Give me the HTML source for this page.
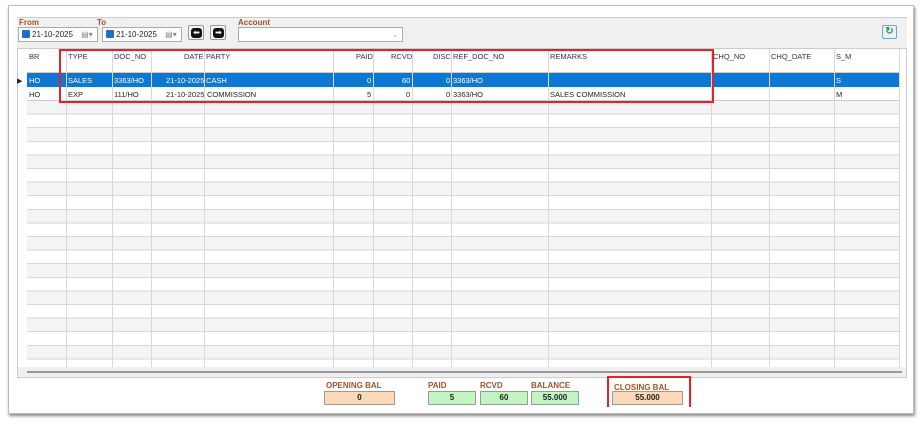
<!DOCTYPE html>
<html><head><style>
*{margin:0;padding:0;box-sizing:border-box}
body{width:924px;height:424px;background:#fff;font-family:"Liberation Sans",Arial,sans-serif;font-size:8px;color:#222;position:relative;overflow:hidden}
.a{position:absolute}
.win{left:8px;top:5px;width:906px;height:409px;border:1px solid #bbb;box-shadow:1px 2px 3px #888;background:#fff}
.lbl{color:#a0522d;font-weight:bold;font-size:8px}
.dt{height:15px;border:1px solid #aaa;background:#fff;font-size:8px;padding:2px 0 0 3px}
.cb{display:inline-block;width:8px;height:8px;background:#1e6fc8;border-radius:1px;vertical-align:-1px;margin-right:2px}
.nb{width:16px;height:15px;border:1px solid #999;border-radius:2px;background:#f4f4f4}
.nb div{position:absolute;left:2px;top:2px;width:11px;height:10px;background:#111;border-radius:3px;color:#fff;font-size:8px;line-height:10px;text-align:center}
.h{position:absolute;top:52px;font-size:7.5px;color:#333}
.c{position:absolute;font-size:7.5px}
.vl{position:absolute;top:49px;width:1px;height:318px;background:#d8d8d8}
.box{font-size:8px;font-weight:bold;text-align:center;line-height:12px;height:14px;border:1px solid #999}
</style></head><body>
<div class="a win"></div>
<div class="a" style="left:17px;top:17px;width:890px;height:31px;background:#f0f0f0;border-top:1px solid #ccc"></div>
<div class="a lbl" style="left:19px;top:18px">From</div>
<div class="a lbl" style="left:97px;top:18px">To</div>
<div class="a lbl" style="left:238px;top:18px">Account</div>
<div class="a dt" style="left:18px;top:27px;width:80px"><span class="cb"></span>21-10-2025 <span style="color:#888;margin-left:6px">▤▾</span></div>
<div class="a dt" style="left:102px;top:27px;width:80px"><span class="cb"></span>21-10-2025 <span style="color:#888;margin-left:6px">▤▾</span></div>
<div class="a nb" style="left:188px;top:25px"><div>⬅</div></div>
<div class="a nb" style="left:210px;top:25px"><div>➡</div></div>
<div class="a" style="left:238px;top:27px;width:165px;height:15px;border:1px solid #aaa;background:#fff;color:#999;font-size:7px;text-align:right;padding:3px 4px 0 0">⌄</div>
<div class="a" style="left:882px;top:25px;width:15px;height:14px;border:1px solid #6aa6d8;border-radius:2px;background:#e8f3fb;color:#2a9a3a;font-size:10px;line-height:12px;text-align:center;font-weight:bold">↻</div>
<!-- grid -->
<div class="a" style="left:17px;top:48px;width:890px;height:330px;background:#fff;border:1px solid #ccc"></div>
<div class="a" style="left:18px;top:367px;width:888px;height:10px;background:#f0f0f0"></div>
<div class="a" style="left:27px;top:49px;width:872px;height:24px;background:#fff;border-bottom:1px solid #ccc"></div>
<div class="a" style="left:27px;top:101px;width:872px;height:266px;background:repeating-linear-gradient(#f4f4f4 0,#f4f4f4 12.6px,#d6d6d6 12.6px,#d6d6d6 13.6px,#fff 13.6px,#fff 26.2px,#d6d6d6 26.2px,#d6d6d6 27.2px)"></div>
<div class="a" style="left:27px;top:73px;width:872px;height:14px;background:#0a78d4"></div>
<div class="a" style="left:27px;top:87px;width:872px;height:14px;background:#fff;border-bottom:1px solid #ccc"></div>
<div class="a" style="left:17px;top:77px;font-size:7px">▶</div>
<div class="vl" style="left:66px"></div><div class="vl" style="left:112px"></div><div class="vl" style="left:151px"></div><div class="vl" style="left:204px"></div><div class="vl" style="left:333px"></div><div class="vl" style="left:373px"></div><div class="vl" style="left:412px"></div><div class="vl" style="left:451px"></div><div class="vl" style="left:548px"></div><div class="vl" style="left:711px"></div><div class="vl" style="left:769px"></div><div class="vl" style="left:834px"></div><div class="vl" style="left:899px"></div>
<div class="h" style="left:29px">BR</div><div class="h" style="left:68px">TYPE</div><div class="h" style="left:114px">DOC_NO</div><div class="h" style="left:184px">DATE</div><div class="h" style="left:206px">PARTY</div><div class="h" style="left:356px">PAID</div><div class="h" style="left:391px">RCVD</div><div class="h" style="left:433px">DISC</div><div class="h" style="left:453px">REF_DOC_NO</div><div class="h" style="left:550px">REMARKS</div><div class="h" style="left:713px">CHQ_NO</div><div class="h" style="left:771px">CHQ_DATE</div><div class="h" style="left:836px">S_M</div>
<div style="color:#fff">
<div class="c" style="left:29px;top:76px">HO</div><div class="c" style="left:68px;top:76px">SALES</div><div class="c" style="left:114px;top:76px">3363/HO</div><div class="c" style="left:166px;top:76px">21-10-2025</div><div class="c" style="left:206px;top:76px">CASH</div><div class="c" style="left:367px;top:76px">0</div><div class="c" style="left:402px;top:76px">60</div><div class="c" style="left:446px;top:76px">0</div><div class="c" style="left:453px;top:76px">3363/HO</div><div class="c" style="left:836px;top:76px">S</div>
</div>
<div class="c" style="left:29px;top:90px">HO</div><div class="c" style="left:68px;top:90px">EXP</div><div class="c" style="left:114px;top:90px">111/HO</div><div class="c" style="left:166px;top:90px">21-10-2025</div><div class="c" style="left:207px;top:90px">COMMISSION</div><div class="c" style="left:367px;top:90px">5</div><div class="c" style="left:406px;top:90px">0</div><div class="c" style="left:446px;top:90px">0</div><div class="c" style="left:453px;top:90px">3363/HO</div><div class="c" style="left:550px;top:90px">SALES COMMISSION</div><div class="c" style="left:836px;top:90px">M</div>
<div class="a" style="left:27px;top:371px;width:875px;height:2px;background:#999"></div>
<!-- totals -->
<div class="a lbl" style="left:326px;top:381px">OPENING BAL</div>
<div class="a box" style="left:324px;top:391px;width:71px;background:#fcd9b8">0</div>
<div class="a lbl" style="left:428px;top:381px">PAID</div>
<div class="a box" style="left:428px;top:391px;width:48px;background:#c2f5c2">5</div>
<div class="a lbl" style="left:480px;top:381px">RCVD</div>
<div class="a box" style="left:480px;top:391px;width:48px;background:#c2f5c2">60</div>
<div class="a lbl" style="left:531px;top:381px">BALANCE</div>
<div class="a box" style="left:531px;top:391px;width:48px;background:#c2f5c2">55.000</div>
<div class="a lbl" style="left:614px;top:383px">CLOSING BAL</div>
<div class="a box" style="left:612px;top:391px;width:71px;background:#fcd9b8">55.000</div>
<!-- red highlights -->
<div class="a" style="left:59px;top:49px;width:655px;height:54px;border:2px solid #e8202a"></div>
<div class="a" style="left:607px;top:376px;width:84px;height:31px;border:2px solid #e8202a;border-bottom:none"></div>
</body></html>
